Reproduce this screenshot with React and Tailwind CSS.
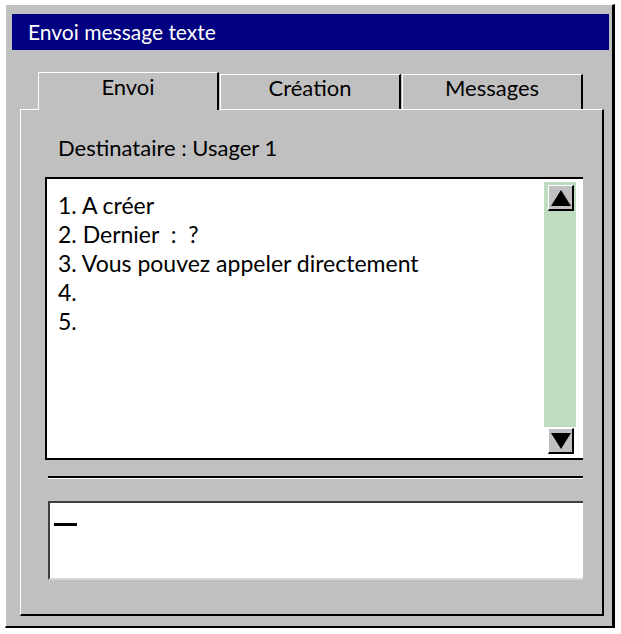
import { useState } from "react";

const tabs = ["Envoi", "Création", "Messages"];

const lines = ["1. A créer", "2. Dernier  :  ?", "3. Vous pouvez appeler directement", "4.", "5."];

function ScrollButton({ dir }) {
  return (
    <div className="w-[26px] h-[26px] bg-[#c0c0c0] border-t border-l border-white border-r-2 border-b-2 border-r-black border-b-black flex items-center justify-center">
      <svg width="20" height="16" viewBox="0 0 20 16">
        {dir === "up" ? <polygon points="10,0 20,16 0,16" fill="#000" /> : <polygon points="0,0 20,0 10,16" fill="#000" />}
      </svg>
    </div>
  );
}

export default function App() {
  const [active, setActive] = useState(0);

  return (
    <div className="min-h-screen bg-white pt-[4px] pl-[5px] font-['Lato',sans-serif] text-black">
      <div className="w-[610px] h-[624px] bg-[#c0c0c0] border-t border-l border-white border-r-[3px] border-b-2 border-r-black border-b-black flex flex-col">
        {/* Title bar */}
        <div className="mt-[9px] ml-[6px] mr-[3px] h-[36px] bg-[#000080] text-white text-[21px] pl-4 flex items-center">
          Envoi message texte
        </div>

        {/* Tabs */}
        <div className="mt-[22px] ml-[32px] flex items-end">
          {tabs.map((t, i) =>
            i === active ? (
              <div
                key={t}
                onClick={() => setActive(i)}
                className={`relative z-10 -mb-px h-[38px] w-[181px] bg-[#c0c0c0] border-t border-l border-white border-r-2 border-r-black text-[22px] leading-[26px] pt-[1px] text-center cursor-default ${i > 0 ? "ml-px" : ""}`}
              >
                {t}
              </div>
            ) : (
              <div
                key={t}
                onClick={() => setActive(i)}
                className={`h-[35px] w-[181px] bg-[#c0c0c0] border-t border-l border-white border-r-2 border-r-black text-[22px] leading-[26px] text-center cursor-default ${i > 0 ? "ml-px" : ""}`}
              >
                {t}
              </div>
            )
          )}
        </div>

        {/* Panel */}
        <div className="flex-1 ml-[14px] mr-[8px] mb-[10px] border-t border-l border-white border-r-2 border-b-2 border-r-black border-b-black flex flex-col">
          <div className="mt-[25px] pl-[37px] h-[26px] leading-[26px] text-[22px]">Destinataire : Usager 1</div>

          {/* Message list */}
          <div className="mt-[16px] ml-[24px] mr-[19px] h-[283px] bg-white border-t-2 border-l-2 border-b-2 border-black flex">
            <div className="flex-1 pl-[11px] pt-[12px] text-[23px] leading-[29px]">
              {lines.map((l) => (
                <div key={l} className="whitespace-pre">{l}</div>
              ))}
            </div>
            <div className="w-[32px] mr-[7px] mt-[3px] flex flex-col">
              <div className="flex-1 bg-[#c0dcc0] pt-[3px] pl-[4px]">
                <ScrollButton dir="up" />
              </div>
              <div className="pl-[4px] pt-px h-[31px]">
                <ScrollButton dir="down" />
              </div>
            </div>
          </div>

          {/* Separator */}
          <div className="mt-[16px] ml-[27px] mr-[19px] border-t-2 border-black border-b border-b-white" />

          {/* Input */}
          <div className="mt-[22px] ml-[27px] mr-[19px] h-[79px] bg-white border-t-2 border-l-2 border-[#404040] border-b-2 border-b-[#d8d8d8]">
            <div className="mt-[20px] ml-[4px] w-[23px] h-[3px] bg-black" />
          </div>
        </div>
      </div>
    </div>
  );
}
